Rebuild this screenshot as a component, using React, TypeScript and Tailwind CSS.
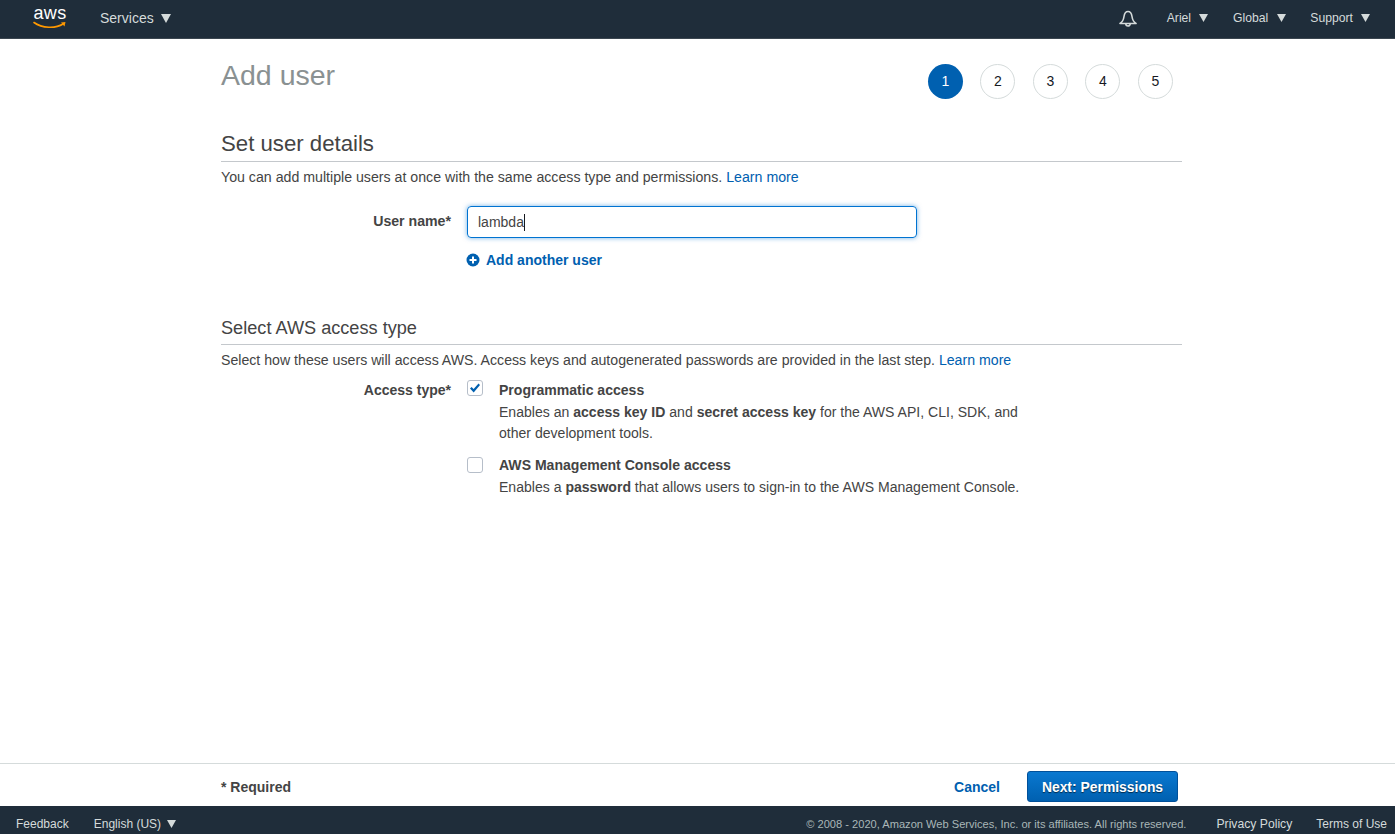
import React from 'react';

const Caret = ({ className = '' }: { className?: string }) => (
  <svg viewBox="0 0 10 9" preserveAspectRatio="none" className={`fill-current ${className}`}>
    <path d="M0 0h10L5 9z" />
  </svg>
);

const steps = [1, 2, 3, 4, 5];

const App: React.FC = () => {
  return (
    <div className="h-[834px] flex flex-col bg-white overflow-hidden font-['Liberation_Sans',Arial,sans-serif] text-[#444] text-[14.15px] leading-[21px]">
      {/* Top nav */}
      <header className="h-[39px] shrink-0 bg-[#1f2d3a] border-b border-[#3b4650] pb-[2px] flex items-center text-[#d5dbdb]">
        <div className="ml-[32px] w-[36px] h-[30px] flex flex-col items-center text-white">
          <span className="text-[18px] leading-[17px] tracking-[0.3px] mt-[2px]">aws</span>
          <svg viewBox="0 0 34 9" className="w-[34px] h-[9px] -mt-[1px]">
            <path d="M1 1.500C9 7.500 23 7.500 30 3" fill="none" stroke="#f90" strokeWidth="1.6" strokeLinecap="round" />
            <path d="M28 1.500l4.500-.5-1 4.500z" fill="#f90" />
          </svg>
        </div>
        <div className="ml-[32px] flex items-center gap-[7px] text-[14px]">
          <span>Services</span>
          <Caret className="w-[10px] h-[9px]" />
        </div>
        <div className="ml-auto flex items-center text-[12.2px]">
          <svg viewBox="0 0 18 18" className="w-[18px] h-[18px] mr-[30px] mt-[2px]" fill="none" stroke="currentColor" strokeWidth="1.6">
            <path d="M1 13.500c2.500-1.500 3.500-3.500 4-7C5.400 3.500 7 1.500 9 1.500s3.600 2 4 5c.5 3.500 1.500 5.500 4 7z" strokeLinejoin="round" />
            <path d="M6.800 13.800a2.200 2.200 0 0 0 4.400 0" />
          </svg>
          <span>Ariel</span>
          <Caret className="w-[9px] h-[8px] ml-[8px] mr-[25px]" />
          <span>Global</span>
          <Caret className="w-[9px] h-[8px] ml-[9px] mr-[24px]" />
          <span>Support</span>
          <Caret className="w-[9px] h-[8px] ml-[8px] mr-[25px]" />
        </div>
      </header>

      {/* Wizard content */}
      <main className="flex-1 min-h-0 ml-[221px] w-[961px]">
        <div className="flex items-start justify-between">
          <h1 className="text-[28.500px] leading-[36px] text-[#8a9192] mt-[18px]">Add user</h1>
          <div className="flex gap-[17.500px] mt-[25px] mr-[9.200px]">
            {steps.map((n) => (
              <div
                key={n}
                className={`w-[35px] h-[35px] rounded-full flex items-center justify-center text-[14px] ${
                  n === 1 ? 'bg-[#0060b0] text-white' : 'border border-[#d5dbdb] text-[#16191f]'
                }`}
              >
                {n}
              </div>
            ))}
          </div>
        </div>

        <section className="mt-[30px]">
          <h2 className="text-[22.200px] leading-[30px] text-[#444] pb-[2px] border-b border-[#c4c8cc]">Set user details</h2>
          <p className="mt-[5px] text-[14.180px]">
            You can add multiple users at once with the same access type and permissions.{' '}
            <a className="text-[#0060b0]">Learn more</a>
          </p>
          <div className="flex mt-[18px]">
            <label className="w-[230px] text-right font-bold pt-[5px]">User name*</label>
            <div className="ml-[16px]">
              <div className="w-[450px] h-[32px] rounded-[4px] border border-[#0073d1] shadow-[0_0_5px_rgba(0,115,209,0.55)] pl-[10px] flex items-center text-[14px]">
                lambda<span className="w-px h-[17px] bg-[#16191f]" />
              </div>
              <a className="mt-[12px] -ml-px flex items-center gap-[6px] font-bold text-[14px] text-[#0060b0]">
                <svg viewBox="0 0 14 14" className="w-[14px] h-[14px] -mt-px">
                  <circle cx="7" cy="7" r="6.500" fill="#0060b0" />
                  <path d="M7 3.500v7M3.500 7h7" stroke="#fff" strokeWidth="2" />
                </svg>
                Add another user
              </a>
            </div>
          </div>
        </section>

        <section className="mt-[45px]">
          <h2 className="text-[18.150px] leading-[24px] text-[#444] pb-[4px] border-b border-[#c4c8cc]">Select AWS access type</h2>
          <p className="mt-[5px]">
            Select how these users will access AWS. Access keys and autogenerated passwords are provided in the last step.{' '}
            <a className="text-[#0060b0]">Learn more</a>
          </p>
          <div className="flex mt-[9px] leading-[21.500px] text-[14.050px]">
            <label className="w-[230px] text-right font-bold text-[14px]">Access type*</label>
            <div className="ml-[16px] flex flex-col gap-[10px]">
              <div className="flex">
                <span className="w-[16px] h-[16px] rounded-[3px] border border-[#b6bec9] flex items-center justify-center shrink-0">
                  <svg viewBox="0 0 12 12" className="w-[12px] h-[12px]">
                    <path d="M1 6.500l1.600-1.500L4.600 7 9.500 1.500 11 3 4.700 10.500z" fill="#0060b0" />
                  </svg>
                </span>
                <div className="ml-[16px] w-[540px]">
                  <div className="font-bold">Programmatic access</div>
                  <div>
                    Enables an <b>access key ID</b> and <b>secret access key</b> for the AWS API, CLI, SDK, and
                    <br />
                    other development tools.
                  </div>
                </div>
              </div>
              <div className="flex">
                <span className="w-[16px] h-[16px] mt-[2px] rounded-[3px] border border-[#b6bec9] shrink-0" />
                <div className="ml-[16px]">
                  <div className="font-bold">AWS Management Console access</div>
                  <div className="mt-[1px]">
                    Enables a <b>password</b> that allows users to sign-in to the AWS Management Console.
                  </div>
                </div>
              </div>
            </div>
          </div>
        </section>
      </main>

      {/* Action bar */}
      <div className="h-[43px] shrink-0 border-t border-[#d5dbdb] pt-[2px] flex items-center pl-[221px] pr-[217px] text-[14px]">
        <span className="font-bold mt-[2px]">* Required</span>
        <a className="ml-auto font-bold text-[#0060b0] mt-[2px]">Cancel</a>
        <button className="ml-[27px] w-[151px] h-[31px] pt-[2px] rounded-[3px] border border-[#00509a] bg-gradient-to-b from-[#0a78d0] to-[#0060b0] text-white font-bold text-[13.900px] [text-shadow:0_1px_1px_rgba(0,0,0,0.6)]">
          Next: Permissions
        </button>
      </div>

      {/* Footer */}
      <footer className="h-[28px] shrink-0 bg-[#1f2d3a] flex items-center pt-[8px] text-[12px] text-[#d5dbdb] pl-[16px] pr-[8px]">
        <span>Feedback</span>
        <span className="ml-[25px]">English (US)</span>
        <Caret className="w-[9px] h-[8px] ml-[6px]" />
        <span className="ml-auto text-[11.100px] text-[#aab7b8]">© 2008 - 2020, Amazon Web Services, Inc. or its affiliates. All rights reserved.</span>
        <span className="ml-[30px] text-[12.200px]">Privacy Policy</span>
        <span className="ml-[24px]">Terms of Use</span>
      </footer>
    </div>
  );
};

export default App;
